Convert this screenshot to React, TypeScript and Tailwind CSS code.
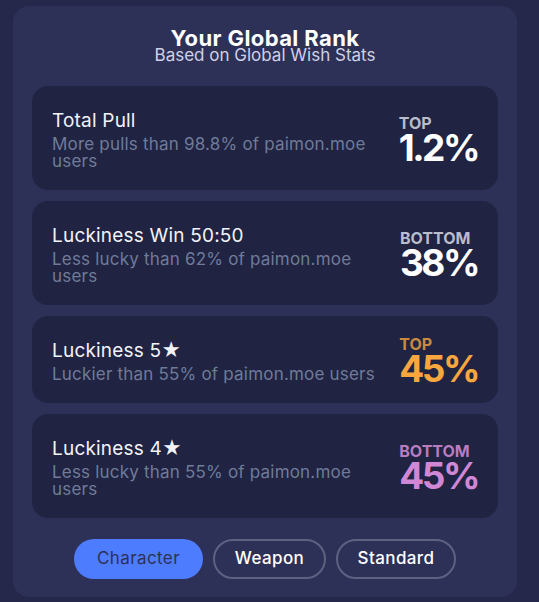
const ranks = [
  {
    title: "Total Pull",
    desc: "More pulls than 98.8% of paimon.moe users",
    label: "TOP",
    value: "1.2%",
    labelClass: "text-[#b9bccb]",
    valueClass: "text-white",
  },
  {
    title: "Luckiness Win 50:50",
    desc: "Less lucky than 62% of paimon.moe users",
    label: "BOTTOM",
    value: "38%",
    labelClass: "text-[#b9bccb]",
    valueClass: "text-white",
  },
  {
    title: "Luckiness 5★",
    desc: "Luckier than 55% of paimon.moe users",
    label: "TOP",
    value: "45%",
    labelClass: "text-[#c88b3f]",
    valueClass: "text-[#f9a63f]",
  },
  {
    title: "Luckiness 4★",
    desc: "Less lucky than 55% of paimon.moe users",
    label: "BOTTOM",
    value: "45%",
    labelClass: "text-[#b97cbd]",
    valueClass: "text-[#d087d6]",
  },
];

const tabs = [
  { name: "Character", width: "w-[129px]", active: true },
  { name: "Weapon", width: "w-[113px]", active: false },
  { name: "Standard", width: "w-[120px]", active: false },
];

export default function App() {
  return (
    <div
      className="min-h-screen bg-[#25284a] pl-[13px] pt-[6px]"
      style={{ fontFamily: "Inter, 'DejaVu Sans', sans-serif" }}
    >
      <div className="h-[591px] w-[504px] rounded-2xl bg-[#2d3157] px-[19px] pt-[22px]">
        <div className="text-center">
          <h2 className="text-[22px] font-bold leading-5 tracking-[0.4px] text-white">
            Your Global Rank
          </h2>
          <p className="text-[17px] leading-[15px] text-[#d0d2e4]">
            Based on Global Wish Stats
          </p>
        </div>

        <div className="mt-[23px] flex flex-col gap-[11px]">
          {ranks.map((r) => (
            <RankCard key={r.title} {...r} />
          ))}
        </div>

        <div className="mt-[21px] flex justify-center gap-[10px]">
          {tabs.map((t) => (
            <button
              key={t.name}
              type="button"
              className={`h-10 ${t.width} rounded-full text-[17px] tracking-[0.4px] ${
                t.active
                  ? "bg-[#4e7cff] text-[#2d3157]"
                  : "border-2 border-[#5d6182] font-medium text-white"
              }`}
            >
              {t.name}
            </button>
          ))}
        </div>
      </div>
    </div>
  );
}

interface RankCardProps {
  title: string;
  desc: string;
  label: string;
  value: string;
  labelClass: string;
  valueClass: string;
}

function RankCard({ title, desc, label, value, labelClass, valueClass }: RankCardProps) {
  return (
    <div className="flex items-center gap-4 rounded-2xl bg-[#202342] px-5 pb-[20px] pt-[22px]">
      <div className="min-w-0 flex-1">
        <p className="text-[19px] leading-[25px] tracking-[0.2px] text-[#f2f3f8]">
          {title}
        </p>
        <p className="mt-[3px] text-[17px] leading-[17px] tracking-[0.2px] text-[#6f7b99]">
          {desc}
        </p>
      </div>
      <div className="-my-[2px] flex shrink-0 flex-col items-start">
        <span className={`text-[16px] font-bold leading-4 ${labelClass}`}>
          {label}
        </span>
        <span
          className={`text-[37px] font-bold leading-[33px] tracking-[-2.5px] ${valueClass}`}
        >
          {value}
        </span>
      </div>
    </div>
  );
}
